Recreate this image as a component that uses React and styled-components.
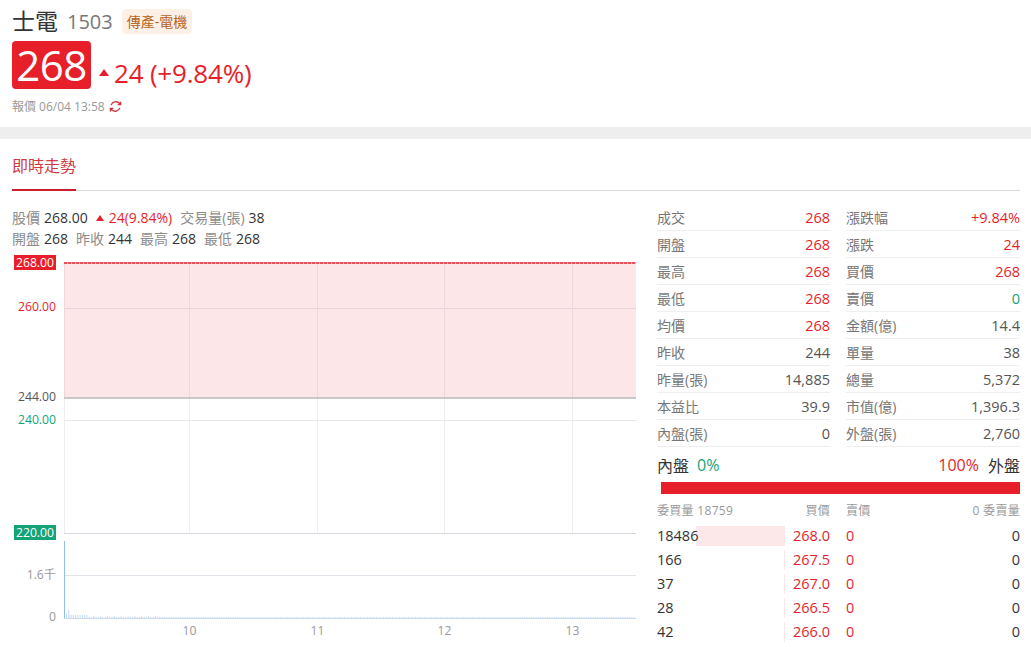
import React from 'react'
import styled, { createGlobalStyle } from 'styled-components'

const RED = '#e61f2a'
const GREEN = '#14a376'
const GREY = '#8c8c8c'
const FONT = '"Open Sans", "Noto Sans CJK TC", sans-serif'

const GlobalStyle = createGlobalStyle`
html, body {
  margin: 0;
  padding: 0;
  background: #fff;
  overflow: hidden;
  height: 647px;
}
body {
  font-family: ${FONT};
  color: #333;
}
`

const Header = styled.header`
height: 127px;
padding: 8px 12px 0;
box-sizing: border-box;
`

const TitleRow = styled.div`
display: flex;
align-items: center;
height: 27px;
`

const StockName = styled.h1`
margin: 0;
font-size: 23px;
font-weight: 400;
color: #333;
line-height: 27px;
`

const StockCode = styled.span`
margin-left: 9px;
font-size: 20px;
color: #777;
font-family: "Open Sans", sans-serif;
`

const Tag = styled.span`
margin-left: 9px;
padding: 0 5px;
height: 25px;
line-height: 25px;
border-radius: 4px;
background: #fdf1e7;
color: #b8651b;
font-size: 14px;
`

const PriceRow = styled.div`
display: flex;
align-items: center;
height: 48px;
margin-top: 6px;
`

const PriceBox = styled.div`
width: 79px;
height: 48px;
line-height: 48px;
text-align: center;
border-radius: 4px;
background: ${RED};
color: #fff;
font-size: 42px;
letter-spacing: -0.5px;
`

const Change = styled.div`
display: flex;
align-items: center;
margin-left: 8px;
margin-top: 15px;
color: ${RED};
font-size: 26px;
letter-spacing: -0.2px;
`

const UpMark = styled.i`
display: inline-block;
width: 0;
height: 0;
margin-right: ${p => p.$gap}px;
border-left: ${p => p.$size}px solid transparent;
border-right: ${p => p.$size}px solid transparent;
border-bottom: ${p => p.$size + 2}px solid ${RED};
`

const QuoteTime = styled.div`
display: flex;
align-items: center;
gap: 4px;
margin-top: 8px;
font-size: 12px;
color: #999;
`

const Band = styled.div`
height: 12px;
background: #eee;
`

const Tabs = styled.nav`
display: flex;
height: 51px;
margin: 0 11px 0 12px;
border-bottom: 1px solid #d9d9d9;
box-sizing: content-box;
`

const Tab = styled.a`
height: 50px;
line-height: 55px;
width: 64px;
box-sizing: content-box;
font-size: 16px;
color: #cf3a44;
border-bottom: 2px solid #c9202b;
margin-bottom: -1px;
white-space: nowrap;
`

const Main = styled.main`
display: flex;
`

const ChartColumn = styled.section`
width: 636px;
flex: none;
`

const Info = styled.div`
padding: 16px 0 0 12px;
height: 47px;
font-size: 14px;
line-height: 21px;
`

const InfoLine = styled.div`
display: flex;
align-items: center;
gap: 8px;
`

const Pair = styled.span`
display: inline-flex;
align-items: center;
gap: 4px;
color: #333;
`

const Muted = styled.span`
color: ${GREY};
`

const RedText = styled.span`
color: ${RED};
display: inline-flex;
align-items: center;
`

const ChartSvg = styled.svg`
display: block;
`

const SidePanel = styled.aside`
width: 363px;
margin-left: 21px;
padding-top: 13px;
`

const StatsGrid = styled.div`
display: grid;
grid-template-columns: 173px 174px;
column-gap: 16px;
`

const StatRow = styled.div`
display: flex;
justify-content: space-between;
align-items: center;
height: 26px;
border-bottom: 1px solid #efefef;
font-size: 14px;
color: #777;
`

const StatValue = styled.span`
font-size: 14.5px;
color: ${p => p.$color || '#555'};
`

const RatioLabels = styled.div`
display: flex;
align-items: center;
height: 22px;
margin-top: 7px;
font-size: 16px;
`

const RatioText = styled.span`
color: ${p => p.$color};
margin-left: ${p => p.$gap || 0}px;
`

const Spacer = styled.span`
flex: 1;
`

const RatioBar = styled.div`
height: 12px;
margin: 6px 0 0 4px;
background: ${RED};
`

const BookHead = styled.div`
display: grid;
grid-template-columns: 173px 174px;
column-gap: 16px;
margin-top: 6px;
height: 24px;
line-height: 22px;
font-size: 12px;
letter-spacing: 0.3px;
color: #999;
`

const HeadCell = styled.div`
display: flex;
justify-content: space-between;
`

const BookRow = styled.div`
display: grid;
grid-template-columns: 173px 174px;
column-gap: 16px;
height: 24px;
line-height: 24px;
font-size: 14.5px;
`

const BidCell = styled.div`
display: flex;
justify-content: space-between;
color: #333;
`

const BidBar = styled.div`
position: relative;
width: 128px;
height: 20px;
line-height: 20px;
margin-top: 2px;
border-right: 1px solid #fbe6e7;
box-sizing: border-box;
&::after {
  content: '';
  position: absolute;
  top: 0;
  bottom: 0;
  right: 0;
  width: ${p => p.$fill}px;
  background: #fce8e9;
}
`

const BarLabel = styled.span`
position: relative;
z-index: 1;
`

const AskCell = styled.div`
display: flex;
justify-content: space-between;
color: #333;
`

const stats = [
  ['成交', '268', RED, '漲跌幅', '+9.84%', RED],
  ['開盤', '268', RED, '漲跌', '24', RED],
  ['最高', '268', RED, '買價', '268', RED],
  ['最低', '268', RED, '賣價', '0', GREEN],
  ['均價', '268', RED, '金額(億)', '14.4'],
  ['昨收', '244', null, '單量', '38'],
  ['昨量(張)', '14,885', null, '總量', '5,372'],
  ['本益比', '39.9', null, '市值(億)', '1,396.3'],
  ['內盤(張)', '0', null, '外盤(張)', '2,760'],
]

const book = [
  ['18486', '268.0', 88],
  ['166', '267.5', 0],
  ['37', '267.0', 0],
  ['28', '266.5', 0],
  ['42', '266.0', 0],
]

// small volume ticks after the opening spike
const volumeBars = Array.from({ length: 250 }, (_, i) => {
  const x = 66 + i * 2.28
  let h = 1
  if (i === 0) h = 4
  if (i === 1) h = 8
  if (i > 1 && i < 10) h = 3
  if (i >= 10 && i < 40 && i % 3 === 0) h = 2
  return { x, h }
})

const gridX = [189, 317, 444, 572]
const hours = [[189, '10'], [317, '11'], [444, '12'], [572, '13']]

const RefreshIcon = () => (
  <svg width="13" height="13" viewBox="0 0 24 24" fill="none" stroke="#c9363f" strokeWidth="2.4">
    <path d="M4 9.5A9 9 0 0 1 18.5 5.5L20 7" />
    <path d="M21.5 3v5.5H16" fill="#c9363f" />
    <path d="M20 14.5A9 9 0 0 1 5.5 18.5L4 17" />
    <path d="M2.5 21v-5.5H8" fill="#c9363f" />
  </svg>
)

// the chart sits 254px down the page, so y below is pageY - 254
const PriceChart = () => (
  <ChartSvg width="636" height="393" viewBox="0 0 636 393" fontFamily={FONT} fontSize="12.2">
    <rect x="64" y="9" width="572" height="135" fill="#fce6e7" />
    {[54, 166].map(y => (
      <line key={y} x1="64" x2="636" y1={y + 0.5} y2={y + 0.5} stroke={y === 54 ? '#e8d5de' : '#e6e6ec'} />
    ))}
    {[64, ...gridX].map(x => (
      <React.Fragment key={x}>
        <line x1={x + 0.5} x2={x + 0.5} y1="9" y2="144" stroke="#ecd9de" />
        <line x1={x + 0.5} x2={x + 0.5} y1="144" y2="279" stroke="#eeeef2" />
      </React.Fragment>
    ))}
    <line x1="64" x2="636" y1="9" y2="9" stroke="#f2a3a8" strokeWidth="2" />
    <line x1="64" x2="636" y1="9" y2="9" stroke="#e6535c" strokeWidth="2" strokeDasharray="3 1" />
    <line x1="64" x2="636" y1="144" y2="144" stroke="#c9c9c9" strokeWidth="2" />
    <line x1="64" x2="636" y1="279.5" y2="279.5" stroke="#d6d6de" />

    <rect x="14" y="1" width="42" height="15" fill={RED} />
    <text x="35" y="12.5" fill="#fff" textAnchor="middle">268.00</text>
    <text x="56" y="57" fill={RED} textAnchor="end">260.00</text>
    <text x="56" y="147" fill="#555" textAnchor="end">244.00</text>
    <text x="56" y="170" fill={GREEN} textAnchor="end">240.00</text>
    <rect x="14" y="271" width="42" height="15" fill={GREEN} />
    <text x="35" y="282.5" fill="#fff" textAnchor="middle">220.00</text>

    <line x1="64" x2="636" y1="321.5" y2="321.5" stroke="#e3e3ea" />
    <line x1="64" x2="636" y1="364.5" y2="364.5" stroke="#c9d9ee" />
    <text x="56" y="325" fill="#999" textAnchor="end">1.6千</text>
    <text x="56" y="367" fill="#999" textAnchor="end">0</text>
    <line x1="64.5" x2="64.5" y1="287" y2="364" stroke="#8fc0ee" />
    {volumeBars.map(b => (
      <rect key={b.x} x={b.x} y={364 - b.h} width="1" height={b.h} fill="#c3dcf5" />
    ))}
    {hours.map(([x, label]) => (
      <text key={label} x={x + 0.5} y="381" fill="#999" textAnchor="middle">{label}</text>
    ))}
  </ChartSvg>
)

export default function App() {
  return (
    <>
      <GlobalStyle />
      <Header>
        <TitleRow>
          <StockName>士電</StockName>
          <StockCode>1503</StockCode>
          <Tag>傳產-電機</Tag>
        </TitleRow>
        <PriceRow>
          <PriceBox>268</PriceBox>
          <Change>
            <UpMark $size={5} $gap={5} />
            24 (+9.84%)
          </Change>
        </PriceRow>
        <QuoteTime>
          報價 06/04 13:58 <RefreshIcon />
        </QuoteTime>
      </Header>
      <Band />
      <Tabs>
        <Tab>即時走勢</Tab>
      </Tabs>
      <Main>
        <ChartColumn>
          <Info>
            <InfoLine>
              <Pair><Muted>股價</Muted> 268.00</Pair>
              <RedText><UpMark $size={4} $gap={5} />24(9.84%)</RedText>
              <Pair><Muted>交易量(張)</Muted> 38</Pair>
            </InfoLine>
            <InfoLine>
              <Pair><Muted>開盤</Muted> 268</Pair>
              <Pair><Muted>昨收</Muted> 244</Pair>
              <Pair><Muted>最高</Muted> 268</Pair>
              <Pair><Muted>最低</Muted> 268</Pair>
            </InfoLine>
          </Info>
          <PriceChart />
        </ChartColumn>
        <SidePanel>
          <StatsGrid>
            {stats.map(([l1, v1, c1, l2, v2, c2]) => (
              <React.Fragment key={l1}>
                <StatRow><span>{l1}</span><StatValue $color={c1}>{v1}</StatValue></StatRow>
                <StatRow><span>{l2}</span><StatValue $color={c2}>{v2}</StatValue></StatRow>
              </React.Fragment>
            ))}
          </StatsGrid>
          <RatioLabels>
            <RatioText $color="#333">內盤</RatioText>
            <RatioText $color={GREEN} $gap={8}>0%</RatioText>
            <Spacer />
            <RatioText $color={RED}>100%</RatioText>
            <RatioText $color="#333" $gap={9}>外盤</RatioText>
          </RatioLabels>
          <RatioBar />
          <BookHead>
            <HeadCell><span>委買量 18759</span><span>買價</span></HeadCell>
            <HeadCell><span>賣價</span><span>0 委賣量</span></HeadCell>
          </BookHead>
          {book.map(([vol, price, fill]) => (
            <BookRow key={price}>
              <BidCell>
                <BidBar $fill={fill}><BarLabel>{vol}</BarLabel></BidBar>
                <RedText>{price}</RedText>
              </BidCell>
              <AskCell>
                <RedText>0</RedText>
                <span>0</span>
              </AskCell>
            </BookRow>
          ))}
        </SidePanel>
      </Main>
    </>
  )
}
